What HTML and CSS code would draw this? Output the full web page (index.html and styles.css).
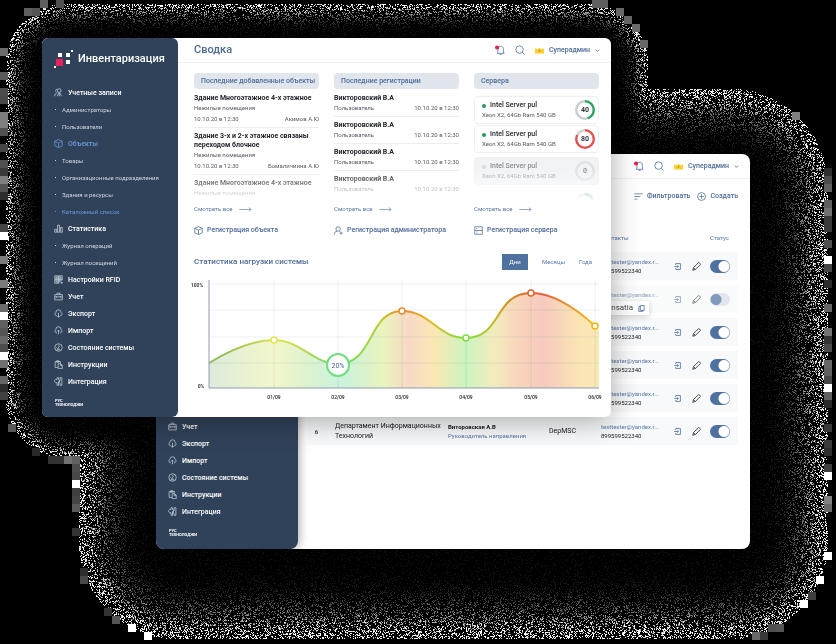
FILE: index.html
```html
<!DOCTYPE html>
<html lang="ru">
<head>
<meta charset="utf-8">
<title>Инвентаризация</title>
<link rel="stylesheet" href="styles.css">
</head>
<body>
<svg class="sprite" aria-hidden="true">
  <symbol id="i-users" viewBox="0 0 24 24"><circle cx="14" cy="7" r="5"/><path d="M2 22c0-6 3-9 7-9M9 22l3-8h4l4 8M5 10c-2-3 0-7 4-7M14 14v8"/></symbol>
  <symbol id="i-box" viewBox="0 0 24 24"><path d="M12 1.5 22 6v12l-10 5L2 18V6zM2 6l10 5 10-5M12 11v12"/></symbol>
  <symbol id="i-bars" viewBox="0 0 24 24"><path d="M2 14h5v8H2zM9.500 3h5v19h-5zM17 9h5v13h-5z"/></symbol>
  <symbol id="i-qr" viewBox="0 0 24 24"><path d="M2 2h8v8H2zM14 2h8v8h-8zM2 14h8v8H2zM5 5h2v2H5zM17 5h2v2h-2zM5 17h2v2H5zM14 14h3v3h-3zM19 19h3v3h-3zM19 14h3M14 21h2M12 1v22M1 12h22"/></symbol>
  <symbol id="i-case" viewBox="0 0 24 24"><path d="M2 7h20v14H2zM8 7V3h8v4M2 13h20M7 11v4M17 11v4"/></symbol>
  <symbol id="i-down" viewBox="0 0 24 24"><path d="M8 18H6a5 5 0 0 1-1-9 7 7 0 0 1 14 0 5 5 0 0 1-1 9h-2M12 10v12M8.500 18.500 12 22l3.500-3.500"/></symbol>
  <symbol id="i-up" viewBox="0 0 24 24"><path d="M8 18H6a5 5 0 0 1-1-9 7 7 0 0 1 14 0 5 5 0 0 1-1 9h-2M12 22V11M8.500 14.500 12 11l3.500 3.500"/></symbol>
  <symbol id="i-gauge" viewBox="0 0 24 24"><circle cx="12" cy="12" r="10"/><path d="m10 14 6-7M7 18h10M5 12h2M12 5v2M9 14a2 2 0 1 0 4 0"/></symbol>
  <symbol id="i-doc" viewBox="0 0 24 24"><path d="M10 20H3V4h14v5M7 2h6v4H7zM11 10h7l4 4v9H11zM17 10v5h5"/></symbol>
  <symbol id="i-plug" viewBox="0 0 24 24"><path d="M12 2H8v5a3 3 0 1 0-4 8h4v7h5M12 2v5a3 3 0 1 1 0 6v9M16 2h5v20h-5v-6a3 3 0 1 1 0-6z"/></symbol>
  <symbol id="i-bell" viewBox="0 0 24 24"><path d="M5 20h17l-2-3V9c0-4-3-6-6-6S7 5 7 9v8zM11 23h5"/><circle cx="5" cy="6" r="5" fill="#e4224f" stroke="none"/></symbol>
  <symbol id="i-search" viewBox="0 0 24 24"><circle cx="11" cy="11" r="9"/><path d="m17.500 17.500 5 5"/></symbol>
  <symbol id="i-crown" viewBox="0 0 24 24"><path d="M0 6l7 3 5-5 5 5 7-3v14H0z" fill="#fbcf2d" stroke="none"/><path d="M12 10v6M9 13h6" stroke="#d58a16"/></symbol>
  <symbol id="i-chev" viewBox="0 0 24 24"><path d="m4 8 8 8 8-8"/></symbol>
  <symbol id="i-arrow" viewBox="0 0 40 16"><path d="M0 8h38M31 2l7 6-7 6"/></symbol>
  <symbol id="i-adduser" viewBox="0 0 24 24"><circle cx="11" cy="8" r="6"/><path d="M1 23c0-6 3-9 7-9M14 14l3 2M19 15v8M15 19h8"/></symbol>
  <symbol id="i-server" viewBox="0 0 24 24"><path d="M2 2h20v20H2zM2 12h20M6 16h3M6 7h3"/></symbol>
  <symbol id="i-filter" viewBox="0 0 24 24"><path d="M1 5h22M1 12h16M1 19h8"/></symbol>
  <symbol id="i-plus" viewBox="0 0 24 24"><circle cx="12" cy="12" r="10.500"/><path d="M12 6v12M6 12h12"/></symbol>
  <symbol id="i-enter" viewBox="0 0 24 24"><path d="M6 7V2h16v20H6v-5M1 12h14M11 8l4 4-4 4"/></symbol>
  <symbol id="i-pen" viewBox="0 0 24 24"><path d="m2 22 2-7L18 1l5 5L9 20zM4 15l5 5"/></symbol>
  <symbol id="i-copy" viewBox="0 0 24 24"><path d="M8 2h13v17H8zM8 5H3v18h13v-4"/></symbol>
</svg>

<canvas class="halo" id="halo"></canvas>

<section class="window window-back">
  <aside class="sidebar sidebar-back">
    <nav class="menu">
      <a href="#" class="menu-item"><svg class="icon"><use href="#i-case"/></svg>Учет</a>
      <a href="#" class="menu-item"><svg class="icon"><use href="#i-down"/></svg>Экспорт</a>
      <a href="#" class="menu-item"><svg class="icon"><use href="#i-up"/></svg>Импорт</a>
      <a href="#" class="menu-item"><svg class="icon"><use href="#i-gauge"/></svg>Состояние системы</a>
      <a href="#" class="menu-item"><svg class="icon"><use href="#i-doc"/></svg>Инструкции</a>
      <a href="#" class="menu-item"><svg class="icon"><use href="#i-plug"/></svg>Интеграция</a>
    </nav>
    <p class="vendor">РУС<br>ТЕХНОЛОДЖИ</p>
  </aside>
  <main class="main">
    <header class="topbar">
      <div class="account">
        <button class="icon-button" aria-label="Уведомления"><svg class="icon icon-lg"><use href="#i-bell"/></svg></button>
        <button class="icon-button" aria-label="Поиск"><svg class="icon icon-lg"><use href="#i-search"/></svg></button>
        <button class="user"><svg class="icon"><use href="#i-crown"/></svg>Суперадмин<svg class="icon icon-sm"><use href="#i-chev"/></svg></button>
      </div>
    </header>
    <div class="toolbar">
      <button class="tool"><svg class="icon"><use href="#i-filter"/></svg>Фильтровать</button>
      <button class="tool"><svg class="icon"><use href="#i-plus"/></svg>Создать</button>
    </div>
    <table class="staff">
      <colgroup><col class="c-num"><col class="c-dept"><col class="c-person"><col class="c-code"><col class="c-contact"><col class="c-act"><col class="c-act"><col class="c-status"></colgroup>
      <thead><tr><th></th><th></th><th></th><th></th><th>Контакты</th><th></th><th></th><th class="status">Статус</th></tr></thead>
      <tbody>
        <tr><td></td><td></td><td></td><td></td><td><a href="#">testtester@yandex.r...</a><br>899599522340</td><td><button class="icon-button" aria-label="Войти"><svg class="icon icon-md"><use href="#i-enter"/></svg></button></td><td><button class="icon-button pen" aria-label="Изменить"><svg class="icon"><use href="#i-pen"/></svg></button></td><td><input type="checkbox" class="toggle" aria-label="Статус" checked></td></tr>
        <tr class="off"><td></td><td></td><td></td><td></td><td><a href="#">testtester@yandex.r...</a><br>899599522340</td><td><button class="icon-button" aria-label="Войти"><svg class="icon icon-md"><use href="#i-enter"/></svg></button></td><td><button class="icon-button pen" aria-label="Изменить"><svg class="icon"><use href="#i-pen"/></svg></button></td><td><input type="checkbox" class="toggle" aria-label="Статус"></td></tr>
        <tr><td></td><td></td><td></td><td></td><td><a href="#">testtester@yandex.r...</a><br>899599522340</td><td><button class="icon-button" aria-label="Войти"><svg class="icon icon-md"><use href="#i-enter"/></svg></button></td><td><button class="icon-button pen" aria-label="Изменить"><svg class="icon"><use href="#i-pen"/></svg></button></td><td><input type="checkbox" class="toggle" aria-label="Статус" checked></td></tr>
        <tr><td></td><td></td><td></td><td></td><td><a href="#">testtester@yandex.r...</a><br>899599522340</td><td><button class="icon-button" aria-label="Войти"><svg class="icon icon-md"><use href="#i-enter"/></svg></button></td><td><button class="icon-button pen" aria-label="Изменить"><svg class="icon"><use href="#i-pen"/></svg></button></td><td><input type="checkbox" class="toggle" aria-label="Статус" checked></td></tr>
        <tr><td></td><td></td><td></td><td></td><td><a href="#">testtester@yandex.r...</a><br>899599522340</td><td><button class="icon-button" aria-label="Войти"><svg class="icon icon-md"><use href="#i-enter"/></svg></button></td><td><button class="icon-button pen" aria-label="Изменить"><svg class="icon"><use href="#i-pen"/></svg></button></td><td><input type="checkbox" class="toggle" aria-label="Статус" checked></td></tr>
        <tr><td class="num">6</td><td class="dept">Департамент Информационных Технологий</td><td><b>Виторовская А.В</b><br><a href="#">Руководитель направления</a></td><td class="code">DepMSC</td><td><a href="#">testtester@yandex.r...</a><br>899599522340</td><td><button class="icon-button" aria-label="Войти"><svg class="icon icon-md"><use href="#i-enter"/></svg></button></td><td><button class="icon-button pen" aria-label="Изменить"><svg class="icon"><use href="#i-pen"/></svg></button></td><td><input type="checkbox" class="toggle" aria-label="Статус" checked></td></tr>
      </tbody>
    </table>
  </main>
  <div class="tip">Ansatia<svg class="icon icon-md"><use href="#i-copy"/></svg></div>
</section>

<section class="window window-front">
  <aside class="sidebar">
    <div class="brand">
      <svg class="logo" viewBox="0 0 20 20"><path fill="#fff" d="M4 4h4v4H4zM12 4h4v4h-4zM12 11h4v4h-4zM17 1h2v2h-2zM0 17h2v2H0z"/><path fill="#f0205c" d="M2 10h7v7H2z"/></svg>
      <span>Инвентаризация</span>
    </div>
    <nav class="menu">
      <a href="#" class="menu-item"><svg class="icon"><use href="#i-users"/></svg>Учетные записи</a>
      <a href="#" class="menu-sub">Администраторы</a>
      <a href="#" class="menu-sub">Пользователи</a>
      <a href="#" class="menu-item current"><svg class="icon"><use href="#i-box"/></svg>Объекты</a>
      <a href="#" class="menu-sub">Товары</a>
      <a href="#" class="menu-sub">Организационные подразделения</a>
      <a href="#" class="menu-sub">Здания и ресурсы</a>
      <a href="#" class="menu-sub current">Каталожный список</a>
      <a href="#" class="menu-item"><svg class="icon"><use href="#i-bars"/></svg>Статистика</a>
      <a href="#" class="menu-sub">Журнал операций</a>
      <a href="#" class="menu-sub">Журнал посещений</a>
      <a href="#" class="menu-item"><svg class="icon"><use href="#i-qr"/></svg>Настройки RFID</a>
      <a href="#" class="menu-item"><svg class="icon"><use href="#i-case"/></svg>Учет</a>
      <a href="#" class="menu-item"><svg class="icon"><use href="#i-down"/></svg>Экспорт</a>
      <a href="#" class="menu-item"><svg class="icon"><use href="#i-up"/></svg>Импорт</a>
      <a href="#" class="menu-item"><svg class="icon"><use href="#i-gauge"/></svg>Состояние системы</a>
      <a href="#" class="menu-item"><svg class="icon"><use href="#i-doc"/></svg>Инструкции</a>
      <a href="#" class="menu-item"><svg class="icon"><use href="#i-plug"/></svg>Интеграция</a>
    </nav>
    <p class="vendor">РУС<br>ТЕХНОЛОДЖИ</p>
  </aside>
  <main class="main">
    <header class="topbar">
      <h1>Сводка</h1>
      <div class="account">
        <button class="icon-button" aria-label="Уведомления"><svg class="icon icon-lg"><use href="#i-bell"/></svg></button>
        <button class="icon-button" aria-label="Поиск"><svg class="icon icon-lg"><use href="#i-search"/></svg></button>
        <button class="user"><svg class="icon"><use href="#i-crown"/></svg>Суперадмин<svg class="icon icon-sm"><use href="#i-chev"/></svg></button>
      </div>
    </header>
    <div class="content">
      <div class="columns">
        <section>
          <h2 class="pill">Последние добавленные объекты</h2>
          <div class="list">
            <article class="entry"><h3>Здание Многоэтажное 4-х этажное</h3><p>Нежилые помещения</p><p class="meta"><span>10.10.20 в 12:30</span><span>Акимов А.Ю</span></p></article>
            <article class="entry"><h3>Здание 3-х и 2-х этажное связаны переходом блочное</h3><p>Нежилые помещения</p><p class="meta"><span>10.10.20 в 12:30</span><span>Бомаличиина А.Ю</span></p></article>
            <article class="entry"><h3>Здание Многоэтажное 4-х этажное</h3><p>Нежилые помещения</p></article>
          </div>
          <a href="#" class="more">Смотреть все<svg class="arrow"><use href="#i-arrow"/></svg></a>
          <a href="#" class="action"><svg class="icon"><use href="#i-box"/></svg>Регистрация объекта</a>
        </section>
        <section>
          <h2 class="pill">Последние регистрации</h2>
          <div class="list">
            <article class="entry person"><h3>Викторовский В.А</h3><p class="line"><span>Пользователь</span><span>10.10.20 в 12:30</span></p></article>
            <article class="entry person"><h3>Викторовский В.А</h3><p class="line"><span>Пользователь</span><span>10.10.20 в 12:30</span></p></article>
            <article class="entry person"><h3>Викторовский В.А</h3><p class="line"><span>Пользователь</span><span>10.10.20 в 12:30</span></p></article>
            <article class="entry person"><h3>Викторовский В.А</h3><p class="line"><span>Пользователь</span><span>10.10.20 в 12:30</span></p></article>
          </div>
          <a href="#" class="more">Смотреть все<svg class="arrow"><use href="#i-arrow"/></svg></a>
          <a href="#" class="action"><svg class="icon"><use href="#i-adduser"/></svg>Регистрация администратора</a>
        </section>
        <section>
          <h2 class="pill">Сервера</h2>
          <div class="list servers">
            <article class="server"><div><h3>Intel Server pul</h3><p>Xeon X2, 64Gb Ram 540 GB</p></div><div class="ring green">40</div></article>
            <article class="server"><div><h3>Intel Server pul</h3><p>Xeon X2, 64Gb Ram 540 GB</p></div><div class="ring red">80</div></article>
            <article class="server idle"><div><h3>Intel Server pul</h3><p>Xeon X2, 64Gb Ram 540 GB</p></div><div class="ring">0</div></article>
            <article class="server next"><div><h3>Intel Server pul</h3></div><div class="ring green"></div></article>
          </div>
          <a href="#" class="more">Смотреть все<svg class="arrow"><use href="#i-arrow"/></svg></a>
          <a href="#" class="action"><svg class="icon"><use href="#i-server"/></svg>Регистрация сервера</a>
        </section>
      </div>
      <div class="stats-head">
        <h2>Статистика нагрузки системы</h2>
        <div class="tabs"><button class="tab active">Дни</button><button class="tab">Месяцы</button><button class="tab">Года</button></div>
      </div>
      <svg class="chart" viewBox="0 0 405 124" role="img" aria-label="Статистика нагрузки системы">
        <defs>
          <linearGradient id="line" gradientUnits="userSpaceOnUse" x1="15" y1="0" x2="405" y2="0">
            <stop offset="0" stop-color="#8db565"/><stop offset=".09" stop-color="#afc850"/><stop offset=".17" stop-color="#dfe650"/><stop offset=".25" stop-color="#b6d84e"/><stop offset=".33" stop-color="#62dc80"/><stop offset=".39" stop-color="#8fdb4c"/><stop offset=".44" stop-color="#c3c832"/><stop offset=".5" stop-color="#ea8a32"/><stop offset=".56" stop-color="#e8b51e"/><stop offset=".66" stop-color="#7ce33d"/><stop offset=".73" stop-color="#c4b82a"/><stop offset=".82" stop-color="#e4632d"/><stop offset=".86" stop-color="#e35f3c"/><stop offset=".93" stop-color="#eb9a29"/><stop offset="1" stop-color="#f4c414"/>
          </linearGradient>
          <linearGradient id="fill" gradientUnits="userSpaceOnUse" x1="15" y1="0" x2="405" y2="0">
            <stop offset="0" stop-color="#dcebdb"/><stop offset=".17" stop-color="#f3f7cb"/><stop offset=".25" stop-color="#dff2cf"/><stop offset=".34" stop-color="#c9f3de"/><stop offset=".45" stop-color="#eaf3bd"/><stop offset=".51" stop-color="#f8d9c6"/><stop offset=".58" stop-color="#fae8b4"/><stop offset=".66" stop-color="#cbf5c0"/><stop offset=".73" stop-color="#f3ecbd"/><stop offset=".8" stop-color="#f9d2bb"/><stop offset=".86" stop-color="#f7cabf"/><stop offset=".95" stop-color="#fae5b4"/><stop offset="1" stop-color="#f9e8b5"/>
          </linearGradient>
        </defs>
        <path fill="url(#fill)" d="M15 85C36 72 60 62 80 62C106 62 120 86 144 86C180 86 174 33 208 33C236 33 244 60 272 60C308 60 300 15 337 15C362 15 388 36 401 48L405 52V110H15Z"/>
        <path class="grid" d="M15 6H405M15 32H405M15 59H405M15 85H405M80 2V110M144 2V110M208 2V110M272 2V110M337 2V110M401 2V110"/>
        <path class="axis" d="M15 2V110H405"/>
        <path fill="none" stroke="url(#line)" stroke-width="2" d="M15 85C36 72 60 62 80 62C106 62 120 86 144 86C180 86 174 33 208 33C236 33 244 60 272 60C308 60 300 15 337 15C362 15 388 36 401 48"/>
        <g fill="#fff" stroke-width="1.500">
          <circle cx="80" cy="62" r="3" stroke="#dfe650"/><circle cx="144" cy="87" r="11" stroke="#70de7c" stroke-width="2"/><circle cx="208" cy="33" r="3" stroke="#ea8a32"/><circle cx="272" cy="60" r="3" stroke="#7ce33d"/><circle cx="337" cy="15" r="3" stroke="#e4632d"/><circle cx="401" cy="48" r="3" stroke="#f4b414"/>
        </g>
        <text class="value" x="144" y="90">20%</text>
        <g class="ticks"><text x="3" y="9">100%</text><text x="7" y="110">0%</text><text x="80" y="121">01/09</text><text x="144" y="121">02/09</text><text x="208" y="121">03/09</text><text x="272" y="121">04/09</text><text x="337" y="121">05/09</text><text x="401" y="121">06/09</text></g>
      </svg>
    </div>
  </main>
</section>
<script src="halo.js"></script>
</body>
</html>
```
FILE: styles.css
```css
* { box-sizing: border-box; }
body {
  margin: 0;
  min-height: 100vh;
  position: relative;
  overflow: hidden;
  background: #000;
  color: #23262b;
  font: 6px/10px Roboto, "Liberation Sans", sans-serif;
}
h1, h2, h3, p { margin: 0; font-size: inherit; }
a { color: inherit; text-decoration: none; }
button { margin: 0; padding: 0; border: 0; background: none; font: inherit; color: inherit; }
.sprite { position: absolute; width: 0; height: 0; }
.halo { position: absolute; inset: 0; }

.icon { width: 9px; height: 9px; flex: none; display: block; fill: none; stroke: currentColor; stroke-width: 2; }
.icon-sm { width: 5px; height: 5px; stroke-width: 4; }
.icon-md { width: 7px; height: 7px; stroke-width: 3; }
.icon-lg { width: 10px; height: 10px; }
.arrow { width: 13px; height: 5px; fill: none; stroke: currentColor; stroke-width: 2; }

.window { position: absolute; display: flex; background: #fff; border-radius: 8px; }
.window-back { left: 156px; right: 86px; top: 154px; bottom: 95px; }
.window-front { left: 42px; right: 225px; top: 38px; border-radius: 6px; box-shadow: 0 4px 28px rgba(0, 0, 0, .34); }

.sidebar { width: 136px; flex: none; padding: 11px 12px 10px; background: #304259; color: #fff; border-radius: 6px; }
.sidebar-back { width: 142px; display: flex; flex-direction: column; justify-content: flex-end; padding-bottom: 12px; border-radius: 8px; box-shadow: 2px 0 8px rgba(0, 0, 0, .3); }
.brand { display: flex; align-items: center; gap: 4px; font-size: 11px; line-height: 20px; font-weight: 500; margin-bottom: 15px; }
.logo { width: 20px; height: 20px; flex: none; }
.menu-item, .menu-sub { display: flex; align-items: center; height: 17px; white-space: nowrap; }
.menu-item { gap: 5px; font-size: 7px; font-weight: 500; }
.menu-sub { gap: 6px; padding-left: 1px; color: #cdd6e1; }
.menu-sub::before { content: ""; width: 1px; height: 1px; background: currentColor; }
.menu .current { color: #6c9ade; }
.menu-item .icon { color: #c6d0dc; }
.menu-item.current .icon { color: #6c9ade; }
.vendor { margin-top: 9px; padding-left: 1px; font-size: 4px; line-height: 4px; font-weight: 700; }

.main { flex: 1; min-width: 0; }
.topbar { display: flex; align-items: center; height: 25px; padding: 0 11px 0 16px; border-bottom: 1px solid #f0f2f4; color: #4c6b98; }
h1 { font-size: 11px; font-weight: 500; }
.account { margin-left: auto; display: flex; align-items: center; gap: 10px; }
.user { display: flex; align-items: center; gap: 5px; font-size: 7px; font-weight: 500; }

.toolbar { display: flex; justify-content: flex-end; gap: 7px; padding: 12px 12px 0; color: #4c6b98; font-size: 7px; font-weight: 500; }
.tool { display: flex; align-items: center; gap: 4px; }
.staff { width: calc(100% - 20px); margin: 27px 12px 0 8px; border-spacing: 0 5px; table-layout: fixed; }
.staff th { height: 14px; padding: 0 0 4px; text-align: left; font-weight: 400; color: #5878a6; }
.staff td { height: 28px; padding: 0; background: #f8f9fa; vertical-align: middle; font-size: 6px; line-height: 9px; color: #16181b; white-space: nowrap; }
.staff td a { color: #5878a6; }
.staff .num { text-align: center; font-weight: 500; }
.staff .dept { padding-left: 8px; font-size: 7px; line-height: 10px; white-space: normal; }
.staff .code { font-size: 7px; }
.staff b { font-weight: 700; }
.staff .off { opacity: .7; }
.c-num { width: 21px; }
.c-dept { width: 121px; }
.c-person { width: 101px; }
.c-code { width: 52px; }
.c-contact { width: 73px; }
.c-act { width: 18px; }
.icon-button { display: block; color: #5878a6; }
.icon-button.pen { color: #16181b; }
.toggle { appearance: none; display: block; width: 20px; height: 13px; margin: 0; border-radius: 7px; background: radial-gradient(circle at 6px 50%, #4f719f 5px, transparent 6px), #d5dce8; }
.toggle:checked { background: radial-gradient(circle at 14px 50%, #fff 5px, transparent 6px), #4f719f; }
.tip { position: absolute; left: 443px; top: 147px; display: flex; align-items: center; gap: 5px; padding: 0 4px 0 7px; height: 14px; background: #fff; font-size: 8px; color: #3b3f45; box-shadow: 0 2px 6px rgba(0, 0, 0, .2); }
.tip .icon { color: #5878a6; }

.content { padding: 10px 12px 15px 16px; }
.columns { display: grid; grid-template-columns: repeat(3, minmax(0, 1fr)); gap: 15px; }
.pill { height: 16px; padding: 0 7px; border-radius: 4px; background: #e0e6ec; color: #4c6b98; font-size: 7px; line-height: 16px; font-weight: 500; white-space: nowrap; }
.list { height: 115px; padding-top: 1px; overflow: hidden; -webkit-mask-image: linear-gradient(#000 70%, transparent 98%); mask-image: linear-gradient(#000 70%, transparent 98%); }
.entry { padding: 4px 0 2px; border-bottom: 1px solid #eceef1; color: #555a61; }
.entry h3 { font-size: 7px; line-height: 9px; font-weight: 700; color: #23262b; }
.meta, .line { display: flex; justify-content: space-between; }
.meta { line-height: 12px; }
.person { padding-bottom: 3px; }
.list.servers { padding-top: 7px; }
.server { display: flex; align-items: center; justify-content: space-between; height: 28px; padding: 0 3px 0 7px; margin-bottom: 1px; border: 1px solid #eef0f2; border-radius: 4px; color: #555a61; line-height: 9px; }
.server h3 { display: flex; align-items: center; gap: 4px; font-size: 7px; font-weight: 500; color: #23262b; }
.server h3::before { content: ""; width: 4px; height: 4px; border-radius: 50%; background: #259a58; }
.ring { width: 20px; height: 20px; border-radius: 50%; display: grid; place-items: center; font-size: 7px; font-weight: 700; color: #33373d; background: radial-gradient(circle, #fff 7px, transparent 8px), #dfe2e6; }
.ring.green { background: radial-gradient(circle, #fff 7px, transparent 8px), conic-gradient(#27a45e 45%, #c9cccf 0); }
.ring.red { background: radial-gradient(circle, #fff 7px, transparent 8px), conic-gradient(#e35050 82%, #d2cfcf 0); }
.idle { margin-top: 4px; background: #f1f3f5; }
.idle > * { opacity: .5; }
.idle h3::before { background: #c3c7cc; }
.idle .ring { background: radial-gradient(circle, #f1f3f5 7px, transparent 8px), #cfd3d8; }
.next { margin-top: 4px; border-color: transparent; }
.more { display: flex; align-items: center; gap: 6px; color: #5878a6; }
.action { display: flex; align-items: center; gap: 4px; margin-top: 11px; color: #4c6b98; font-size: 7px; font-weight: 500; white-space: nowrap; }

.stats-head { display: flex; align-items: center; justify-content: space-between; margin-top: 19px; color: #4c6b98; }
.stats-head h2 { font-size: 8px; font-weight: 500; }
.tabs { display: flex; gap: 14px; padding-right: 7px; }
.tab { height: 16px; color: #5878a6; }
.tab.active { width: 26px; background: #4f719f; color: #fff; }
.chart { display: block; width: 100%; margin-top: 8px; overflow: visible; }
.grid { fill: none; stroke: #5c7080; stroke-opacity: .12; }
.axis { fill: none; stroke: #8d9cb3; }
.value { font-size: 7px; fill: #4c6b98; text-anchor: middle; }
.ticks { font-size: 5px; font-weight: 500; fill: #23262b; text-anchor: middle; }
```
FILE: halo.js
```js
// Paints a dissolving grain halo around each window.
(function () {
  var canvas = document.getElementById('halo');
  var w = canvas.width = window.innerWidth;
  var h = canvas.height = window.innerHeight;
  var ctx = canvas.getContext('2d');
  var seed = 7;
  function rnd() {
    seed = (seed * 1664525 + 1013904223) >>> 0;
    return seed / 4294967296;
  }
  function zone(selector, x, top, bottom, radius) {
    var r = document.querySelector(selector).getBoundingClientRect();
    return { l: r.left - x, t: r.top - top, r: r.right + x, b: r.bottom + bottom, rad: radius, depth: x };
  }
  var zones = [zone('.window-front', 37, 35, 41, 62), zone('.window-back', 78, 66, 90, 100)];
  function inside(z, x, y) {
    var qx = Math.abs(x - (z.l + z.r) / 2) - (z.r - z.l) / 2 + z.rad;
    var qy = Math.abs(y - (z.t + z.b) / 2) - (z.b - z.t) / 2 + z.rad;
    return z.rad - Math.min(Math.max(qx, qy), 0) - Math.hypot(Math.max(qx, 0), Math.max(qy, 0));
  }
  var img = ctx.createImageData(w, h);
  function put(x, y, v) {
    var i = (y * w + x) * 4;
    img.data[i] = img.data[i + 1] = img.data[i + 2] = v;
    img.data[i + 3] = 255;
  }
  for (var by = 0; by < h; by += 8) {
    for (var bx = 0; bx < w; bx += 8) {
      var m = Math.max(inside(zones[0], bx + 4, by + 4), inside(zones[1], bx + 4, by + 4));
      var tone = m > -4 && m < 1 && rnd() < 0.6 ? (rnd() < 0.15 ? 255 : 40 + rnd() * 90) : 0;
      for (var y = by; y < Math.min(by + 8, h); y++) {
        for (var x = bx; x < Math.min(bx + 8, w); x++) {
          var t = 0;
          zones.forEach(function (z) {
            var d = Math.max(0, inside(z, x, y)) / z.depth;
            t += d * d;
          });
          t = Math.sqrt(t);
          if (t === 0 || tone) { put(x, y, tone); continue; }
          var k = Math.max(0, 1 - t);
          put(x, y, rnd() < 0.12 + 0.22 * k ? Math.min(255, 14 + 320 * k * k * k * (0.5 + rnd())) : 0);
        }
      }
    }
  }
  ctx.putImageData(img, 0, 0);
})();
```
